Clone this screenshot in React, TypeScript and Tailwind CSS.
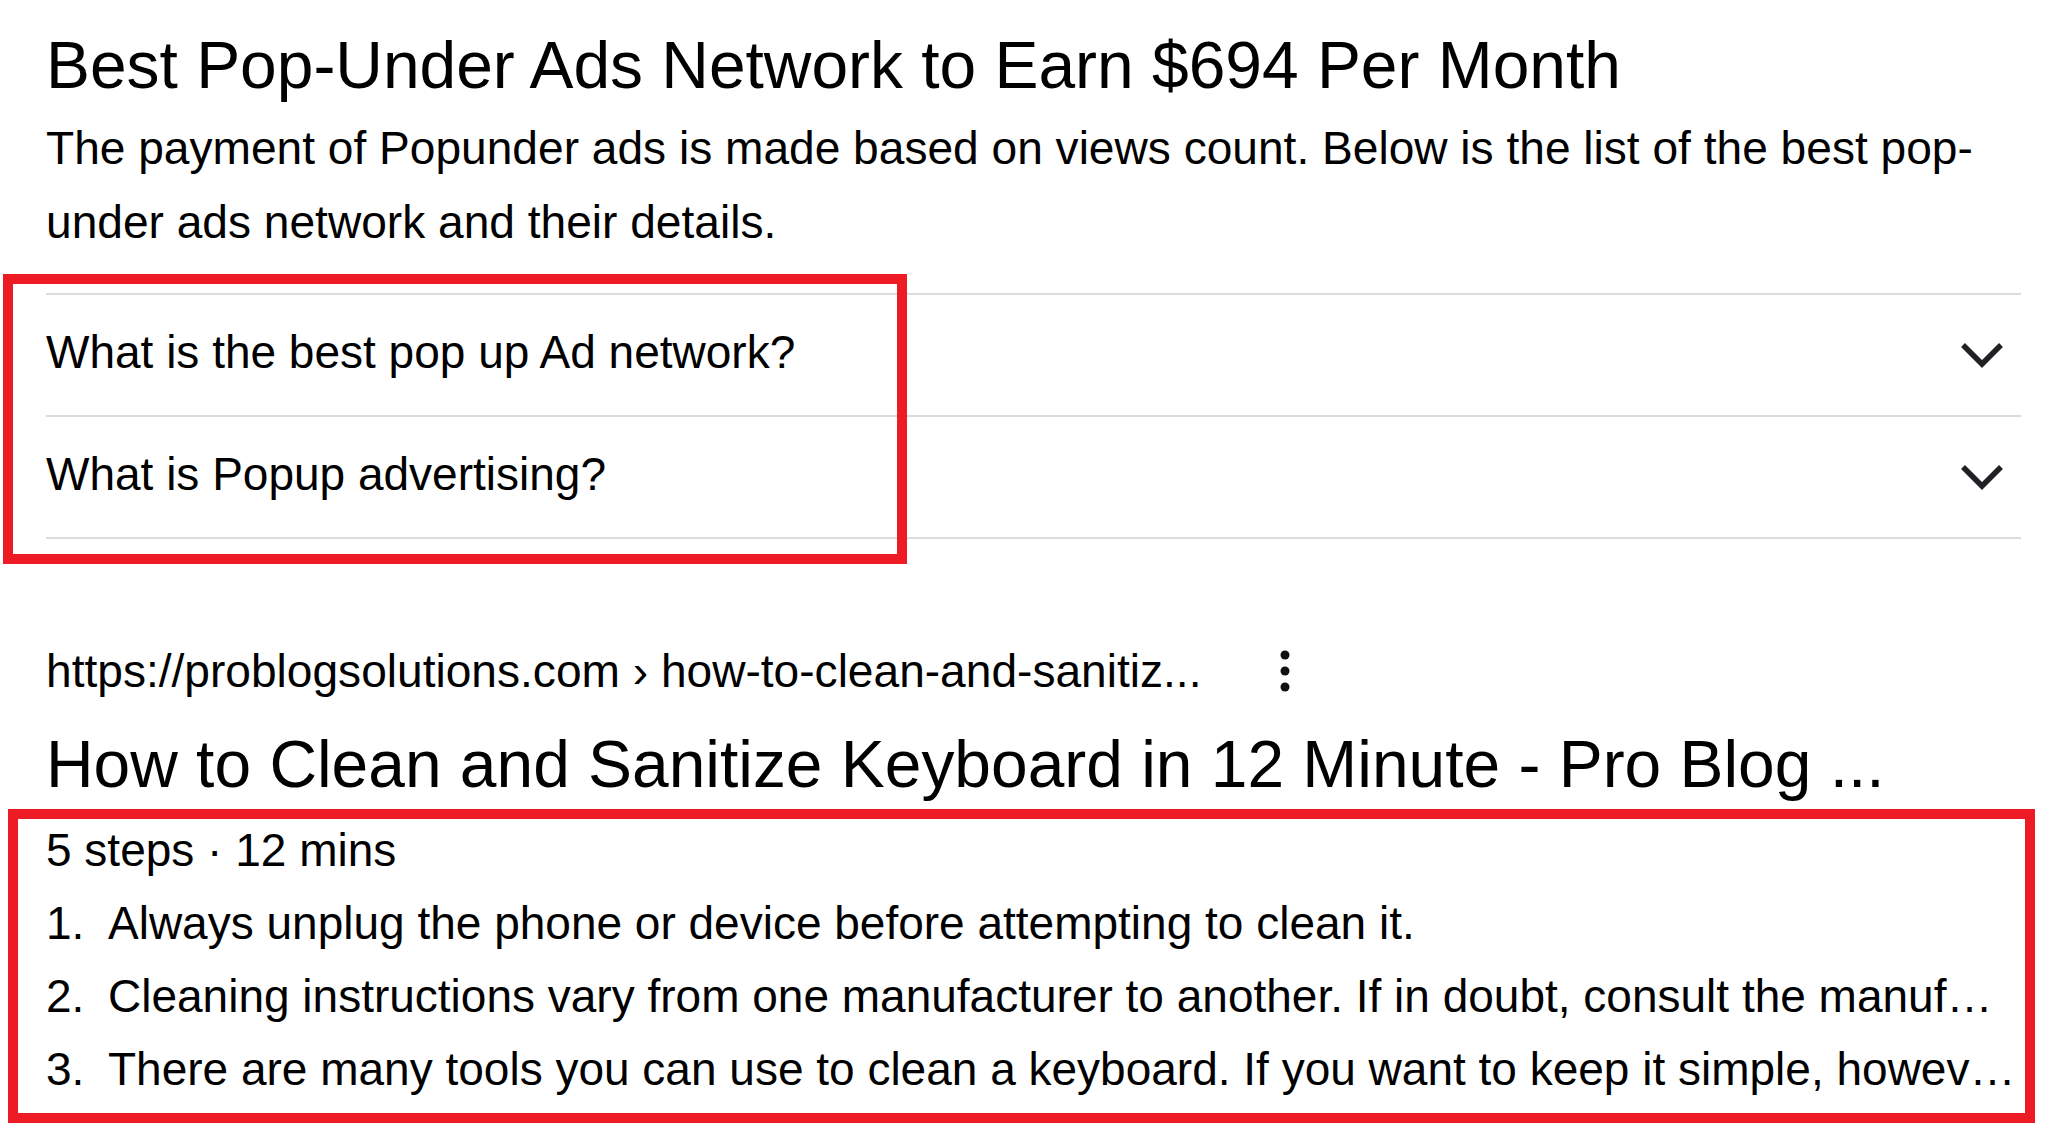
import React from "react";

const font = { fontFamily: '"Liberation Sans", Arial, Helvetica, sans-serif' };

function Chevron() {
  return (
    <svg width="44" height="28" viewBox="0 0 44 28" className="mr-[17px] shrink-0" aria-hidden>
      <polyline points="3,4 22,23 41,4" fill="none" stroke="#202124" strokeWidth="5.5" strokeLinejoin="miter" />
    </svg>
  );
}

function Kebab() {
  return (
    <svg width="10" height="42" viewBox="0 0 10 42" className="ml-[79px] shrink-0" aria-hidden>
      <circle cx="5" cy="5" r="4.5" fill="#111" />
      <circle cx="5" cy="21" r="4.5" fill="#111" />
      <circle cx="5" cy="37" r="4.5" fill="#111" />
    </svg>
  );
}

export default function App() {
  const faqs = ["What is the best pop up Ad network?", "What is Popup advertising?"];
  const steps = [
    "Always unplug the phone or device before attempting to clean it.",
    "Cleaning instructions vary from one manufacturer to another. If in doubt, consult the manuf…",
    "There are many tools you can use to clean a keyboard. If you want to keep it simple, howev…",
  ];
  return (
    <div className="relative w-[2048px] h-[1128px] overflow-hidden bg-white text-black" style={font}>
      <div className="pl-[46px] pr-[27px] pt-[28px]">
        <h1 className="text-[65.9px] leading-[74px] font-normal whitespace-nowrap">
          Best Pop-Under Ads Network to Earn $694 Per Month
        </h1>
        <p className="mt-[9px] text-[46.1px] leading-[74px] whitespace-nowrap">
          The payment of Popunder ads is made based on views count. Below is the list of the best pop-
          <br />
          under ads network and their details.
        </p>

        <div className="mt-[34px] border-b-2 border-[#dadce0]">
          {faqs.map((q) => (
            <div key={q} className="h-[122px] border-t-2 border-[#dadce0] flex items-center justify-between">
              <span className="text-[46px] leading-[52px] pb-[6px] whitespace-nowrap">{q}</span>
              <Chevron />
            </div>
          ))}
        </div>

        <div className="mt-[95px] flex items-center h-[74px]">
          <span className="text-[46.1px] leading-[74px] whitespace-nowrap">
            https://problogsolutions.com › how-to-clean-and-sanitiz...
          </span>
          <Kebab />
        </div>

        <h2 className="mt-[19px] text-[65.9px] leading-[74px] font-normal whitespace-nowrap">
          How to Clean and Sanitize Keyboard in 12 Minute - Pro Blog ...
        </h2>

        <div className="mt-[13px] text-[46px] leading-[73px]">
          <div className="whitespace-nowrap">5 steps · 12 mins</div>
          <ol>
            {steps.map((s, i) => (
              <li key={i} className="flex">
                <span className="w-[62px] shrink-0">{i + 1}.</span>
                <span className="flex-1 min-w-0 whitespace-nowrap">{s}</span>
              </li>
            ))}
          </ol>
        </div>
      </div>

      <div className="absolute left-[3px] top-[274px] w-[904px] h-[290px] border-[10px] border-[#ed1c24]" />
      <div className="absolute left-[8px] top-[809px] w-[2027px] h-[314px] border-[10px] border-[#ed1c24]" />
    </div>
  );
}
